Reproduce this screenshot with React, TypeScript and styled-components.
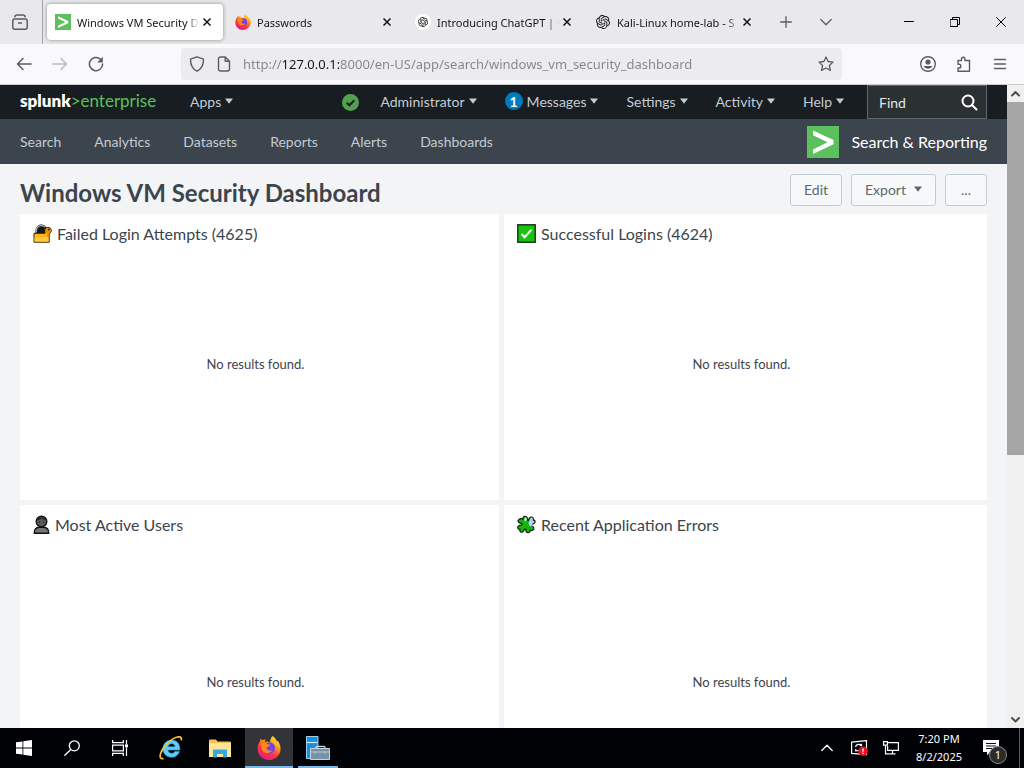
import React from "react";
import styled, { createGlobalStyle, css } from "styled-components";
import { SiOpenai } from "react-icons/si";

const uiFont = `"Noto Sans", "Open Sans", sans-serif`;
const appFont = `Lato, "Open Sans", sans-serif`;

const GlobalStyle = createGlobalStyle`
  *, *::before, *::after { box-sizing: border-box; }
  body { margin: 0; background: #f2f4f5; font-family: ${uiFont}; }
  button, input { font: inherit; margin: 0; }
  h1, h2, p { margin: 0; }
  svg { display: block; flex: none; }
`;

const Desktop = styled.div`
  display: flex;
  flex-direction: column;
  height: 100vh;
  overflow: hidden;
`;

const PlainButton = styled.button`
  display: flex;
  align-items: center;
  justify-content: center;
  padding: 0;
  border: 0;
  background: none;
  color: inherit;
`;

/* ---------- browser chrome ---------- */

const TabStrip = styled.header`
  display: flex;
  align-items: center;
  height: 44px;
  flex: none;
  background: #e9e9eb;
  color: #15141a;
`;

const FirefoxView = styled(PlainButton)`
  width: 43px;
  height: 44px;
  border-right: 1px solid #a5a5a8;
  padding-right: 3px;
  color: #5b5b66;
`;

const TabList = styled.div`
  display: flex;
  gap: 4px;
  padding: 0 3px 0 4px;
`;

const Tab = styled.div<{ $active?: boolean }>`
  display: flex;
  align-items: center;
  width: 176px;
  height: 36px;
  padding: 0 8px;
  border-radius: 4px;
  font-size: 11px;
  ${(p) =>
    p.$active &&
    css`
      background: #fff;
      box-shadow: 0 0 4px rgba(0, 0, 0, 0.4);
    `}
`;

const TabLabel = styled.span`
  flex: 1;
  min-width: 0;
  margin-left: 6px;
  white-space: nowrap;
  mask-image: linear-gradient(to left, transparent, #000 12px);
`;

const TabClose = styled(PlainButton)`
  width: 16px;
  height: 16px;
`;

const StripButton = styled(PlainButton)`
  width: 40px;
  height: 36px;
  color: #5b5b66;
`;

const WindowControls = styled.div`
  display: flex;
  margin-left: auto;
`;

const WindowButton = styled(PlainButton)`
  width: 46px;
  height: 44px;
  color: #000;
`;

const NavBar = styled.div`
  display: flex;
  align-items: center;
  height: 41px;
  flex: none;
  padding: 0 6px;
  background: #f9f9fb;
  border-bottom: 1px solid #cccccf;
  color: #5b5b66;
`;

const NavButton = styled(PlainButton)<{ $faded?: boolean }>`
  width: 36px;
  height: 32px;
  opacity: ${(p) => (p.$faded ? 0.4 : 1)};
`;

const AddressBar = styled.div`
  display: flex;
  align-items: center;
  flex: 1;
  height: 32px;
  margin: 0 68px 0 67px;
  padding: 0 8px;
  gap: 11px;
  border-radius: 4px;
  background: #ececee;
`;

const AddressInput = styled.input`
  flex: 1;
  min-width: 0;
  height: 24px;
  padding: 0;
  border: 0;
  outline: 0;
  font-size: 13px;
  background: linear-gradient(90deg, #85858a 39px, #15141a 39px, #15141a 96px, #85858a 96px);
  background-clip: text;
  -webkit-background-clip: text;
  -webkit-text-fill-color: transparent;
  color: #85858a;
`;

/* ---------- page ---------- */

const Viewport = styled.div`
  display: flex;
  flex: 1;
  min-height: 0;
`;

const Page = styled.div`
  flex: 1;
  min-width: 0;
  overflow: hidden;
  background: #f2f4f5;
  color: #3c444d;
  font-family: ${appFont};
  font-size: 14px;
`;

const GlobalBar = styled.div`
  display: flex;
  align-items: center;
  height: 34px;
  padding: 0 20px;
  background: #171d21;
  color: #c3cbd4;
`;

const Brand = styled.a`
  width: 136px;
  margin-right: 34px;
  color: #5cc05c;
  font-size: 17px;
  line-height: 32px;
  padding-bottom: 2px;
  text-decoration: none;
  white-space: nowrap;
`;

const BrandName = styled.span`
  color: #fff;
  font-weight: 800;
`;

const MenuButton = styled(PlainButton)`
  gap: 4px;
  height: 34px;
  padding-bottom: 2px;
  font-size: 14px;
  white-space: nowrap;
`;

const MenuGroup = styled.div`
  display: flex;
  align-items: center;
  gap: 28px;
  margin-left: auto;
`;

const Account = styled.div`
  display: flex;
  align-items: center;
  gap: 21px;
`;

const Badge = styled.span`
  display: flex;
  align-items: center;
  justify-content: center;
  width: 18px;
  height: 18px;
  border-radius: 50%;
  background: #007abd;
  color: #fff;
  font-size: 14px;
  font-weight: 700;
`;

const FindBox = styled.label`
  display: flex;
  align-items: center;
  width: 120px;
  height: 34px;
  margin-left: 23px;
  padding: 0 8px 0 11px;
  border: 1px solid #5c6773;
  background: #2b3033;
  color: #fff;
`;

const FindInput = styled.input`
  flex: 1;
  min-width: 0;
  padding: 0;
  border: 0;
  outline: 0;
  background: none;
  color: #e1e6eb;
  &::placeholder { color: #e1e6eb; opacity: 1; }
`;

const AppBar = styled.nav`
  display: flex;
  align-items: center;
  gap: 33px;
  height: 45px;
  padding: 0 20px;
  background: #3c444d;
`;

const AppLink = styled.a`
  color: #c3cbd4;
  text-decoration: none;
`;

const AppName = styled.a`
  display: flex;
  align-items: center;
  gap: 12px;
  margin-left: auto;
  color: #fff;
  font-size: 16px;
  text-decoration: none;
`;

const DashboardHeader = styled.div`
  display: flex;
  align-items: center;
  height: 50px;
  padding: 2px 20px 0;
`;

const Title = styled.h1`
  flex: 1;
  padding-top: 6px;
  font-size: 24px;
  line-height: 32px;
  font-weight: 700;
`;

const Actions = styled.div`
  display: flex;
  gap: 9px;
`;

const ActionButton = styled.button`
  display: flex;
  align-items: center;
  justify-content: center;
  gap: 8px;
  min-width: 42px;
  height: 32px;
  padding: 0 13px 2px;
  border: 1px solid #c3cbd4;
  border-radius: 3px;
  background: #f7f8fa;
  color: #5c6773;
  font-size: 14px;
`;

const PanelGrid = styled.main`
  display: grid;
  grid-template-columns: 479fr 483fr;
  grid-template-rows: 286px 340px;
  gap: 5px;
  padding: 0 20px 20px;
`;

const Panel = styled.section`
  display: flex;
  flex-direction: column;
  background: #fff;
`;

const PanelTitle = styled.h2`
  display: flex;
  align-items: center;
  gap: 5px;
  height: 38px;
  padding: 0 13px;
  font-size: 16px;
  font-weight: 400;
`;

const PanelBody = styled.div`
  display: flex;
  flex: 1;
  align-items: center;
  justify-content: center;
  padding: 0 8px 24px 0;
  font-size: 13px;
`;

const ScrollBar = styled.div`
  display: flex;
  flex-direction: column;
  width: 17px;
  background: #f0f0f0;
  color: #505050;
`;

const ScrollStep = styled(PlainButton)`
  width: 17px;
  height: 17px;
`;

const ScrollTrack = styled.div`
  flex: 1;
`;

const ScrollThumb = styled.div`
  height: 58%;
  background: #a6a6a6;
`;

/* ---------- taskbar ---------- */

const Taskbar = styled.footer`
  display: flex;
  height: 40px;
  flex: none;
  background: #010206;
  color: #fff;
`;

const TaskGroup = styled.div<{ $gap: number }>`
  display: flex;
  gap: ${(p) => p.$gap}px;
  margin-right: 3px;
`;

const TaskButton = styled(PlainButton)<{ $active?: boolean; $running?: boolean }>`
  position: relative;
  width: 48px;
  height: 40px;
  background: ${(p) => (p.$active ? "#333438" : "none")};
  ${(p) =>
    (p.$active || p.$running) &&
    css`
      &::after {
        content: "";
        position: absolute;
        right: ${p.$active ? 0 : 4}px;
        bottom: 0;
        left: ${p.$active ? 0 : 4}px;
        height: 2px;
        background: #76b9ed;
      }
    `}
`;

const Tray = styled.div`
  display: flex;
  align-items: center;
  margin-left: auto;
`;

const TrayButton = styled(PlainButton)`
  width: 32px;
  height: 40px;
`;

const Clock = styled.div`
  width: 64px;
  font-size: 11px;
  line-height: 18px;
  text-align: center;
`;

const NoticeButton = styled(PlainButton)`
  position: relative;
  width: 48px;
  height: 40px;
  padding-right: 8px;
`;

const NoticeCount = styled.span`
  position: absolute;
  top: 18px;
  right: 12px;
  width: 18px;
  height: 18px;
  border: 1px solid #8a8a8a;
  border-radius: 50%;
  background: #2b2b2b;
  font-size: 11px;
  line-height: 16px;
`;

const ShowDesktop = styled(PlainButton)`
  width: 5px;
  height: 40px;
  border-left: 1px solid #5a5a5e;
`;

/* ---------- drawings ---------- */

const SplunkMark = ({ size }: { size: number }) => (
  <svg width={size} height={size} viewBox="0 0 32 32" aria-hidden="true">
    <rect width="32" height="32" fill="#5cc05c" />
    <path d="M6 4.5 26.500 14v4.300L6 28v-4.600L20.500 16.200 6 9.200z" fill="#fff" />
  </svg>
);

const FirefoxLogo = ({ size }: { size: number }) => {
  const id = React.useId();
  return (
    <svg width={size} height={size} viewBox="0 0 24 24" aria-hidden="true">
      <defs>
        <linearGradient id={id} x1="0.8" y1="0" x2="0.25" y2="1">
          <stop offset="0" stopColor="#fff44f" />
          <stop offset="0.35" stopColor="#ff980e" />
          <stop offset="0.65" stopColor="#ff3647" />
          <stop offset="1" stopColor="#e31587" />
        </linearGradient>
      </defs>
      <path
        d="M15.500 0c2.500 1.700 3.800 3.700 4.500 5.600l.9-.9c2.200 3.500 3 6.300 2.600 9.200C22.700 19.700 17.900 24 12 24 5.500 24 .5 19 .5 12.800c0-3 1-5.800 2.700-7.800l.1-2.400 2 1.600C6.300 3.500 7.500 3.300 8.600 3.500L7.600 6c2-.9 4.400-.7 6 .5C13 4.200 13.800 1.700 15.500 0z"
        fill={`url(#${id})`}
      />
      <circle cx="12.500" cy="12" r="5.700" fill="#7542e5" />
      <path d="M4 8c2-1.300 4.700-1.200 6.500.2l3 .5c-.5 1.700-3.700 1.600-4 3.400 0 2.200 3.400 3.500 6 2-1.800 3.700-7.500 4-9.800.6C4.500 12.800 3.700 10.400 4 8z" fill="#ff8a16" />
      <path d="M13 5c3.500.5 6 3.500 5.700 7.300 1.200-3 .4-6-1.200-8L15.500 1z" fill="#ffbd2e" />
    </svg>
  );
};

const ChatLogo = ({ boxed }: { boxed?: boolean }) =>
  boxed ? (
    <svg width="16" height="16" viewBox="0 0 16 16" aria-hidden="true">
      <circle cx="8" cy="8" r="8" fill="#fff" />
      <SiOpenai x="3" y="3" size={10} />
    </svg>
  ) : (
    <svg width="16" height="16" viewBox="0 0 16 16" aria-hidden="true">
      <SiOpenai x="1" y="1" size={14} />
    </svg>
  );

const CloseGlyph = () => (
  <svg width="8" height="8" viewBox="0 0 8 8" stroke="currentColor" strokeWidth="1.500" aria-hidden="true">
    <path d="M.5.5l7 7M7.500.5l-7 7" />
  </svg>
);

const Caret = () => (
  <svg width="8" height="6" viewBox="0 0 8 6" aria-hidden="true">
    <path d="M0 .5h8L4 5.800z" fill="currentColor" />
  </svg>
);

const Line = ({ size = 16, width = 1.5, d }: { size?: number; width?: number; d: string }) => (
  <svg
    width={size}
    height={size}
    viewBox={`0 0 ${size} ${size}`}
    fill="none"
    stroke="currentColor"
    strokeWidth={width}
    strokeLinecap="round"
    strokeLinejoin="round"
    aria-hidden="true"
  >
    <path d={d} />
  </svg>
);

const AccountIcon = () => (
  <svg width="16" height="16" viewBox="0 0 16 16" aria-hidden="true">
    <circle cx="8" cy="8" r="7.300" fill="none" stroke="currentColor" strokeWidth="1.400" />
    <circle cx="8" cy="6" r="2.600" fill="currentColor" />
    <path d="M3.500 10h9a5 5 0 0 1-9 0z" fill="currentColor" />
  </svg>
);

const ReloadIcon = () => (
  <svg width="16" height="16" viewBox="0 0 16 16" aria-hidden="true">
    <path d="M12.500 3.200A6.600 6.600 0 1 0 14.600 8" fill="none" stroke="currentColor" strokeWidth="1.500" strokeLinecap="round" />
    <path d="M14.800.8v5.600H9.200z" fill="currentColor" />
  </svg>
);

const LockEmoji = () => (
  <svg width="19" height="19" viewBox="0 0 19 19" aria-hidden="true">
    <path d="M3.500 9V6.300A4.800 4.800 0 0 1 13 5.500V9z" fill="#14181b" stroke="#14181b" strokeWidth="2.200" />
    <path d="M3.300 8.500V6.400a5 5 0 0 1 8.500-3.300" fill="none" stroke="#b4bbc0" strokeWidth="1.300" />
    <path d="M1 9.300h11V6q.2-2.500 3-2.700Q18 3.500 18.400 6.400q0 2.300-2.200 3.200V18.200H1z" fill="#ffb514" stroke="#33270f" strokeWidth="1" />
    <path d="M1.600 13h14v4.600h-14z" fill="#ffc83d" />
    <path d="M12.300 6q.3-2.200 2.800-2.300 2.500.3 2.700 2.800-.2 1.900-2.300 2.600V14L14 12V9.200q-1.700-1-1.700-3.200z" fill="#f28a00" />
    <circle cx="15.800" cy="5.600" r="1" fill="#222" />
  </svg>
);

const CheckEmoji = () => (
  <svg width="19" height="19" viewBox="0 0 19 19" aria-hidden="true">
    <rect x=".8" y=".8" width="17.400" height="17.400" fill="#16c60c" stroke="#1b2b1b" strokeWidth="1.400" />
    <path d="M4.500 10l3.200 3.200 6.800-7.500" fill="none" stroke="#fff" strokeWidth="2" />
  </svg>
);

const UserEmoji = () => (
  <svg width="17" height="19" viewBox="0 0 17 19" aria-hidden="true">
    <path d="M1.300 18.200c-.2-4.500 2-5.800 5-6h4.400c3 .2 5.200 1.500 5 6z" fill="#767676" stroke="#111" strokeWidth="1.400" />
    <circle cx="8.500" cy="6.600" r="5.300" fill="#5c5c5c" stroke="#111" strokeWidth="1.400" />
    <path d="M3.800 5.500C4.300 1.500 12 1 13 5.500 10.500 5 10 4 9 3.500 7.500 4.500 6 5 3.800 5.500z" fill="#25282b" />
    <path d="M6 7h1.200M10 7h1.200" stroke="#111" strokeWidth="1.200" />
  </svg>
);

const PuzzleEmoji = () => (
  <svg width="19" height="19" viewBox="0 0 19 19" aria-hidden="true">
    <path
      d="M2 4.500C3.300 3.200 5 3.600 6.300 4.800 5.300 2.500 6.700 1 8.500 1.300c2 .5 2.200 2 2 3.700l1 .4c.3-2 1.300-3.600 3.200-3.400 1.800.5 1.800 1.800 1.300 2.900 1.500-.2 2.400 1 2 2.400-.7 1.700-2.300 1.900-4 1.900l-.8 1.400c2.200.3 4 1.400 3.600 3.300-.6 1.800-2.200 2-3.600 1.300.1 1.700-1 2.700-2.500 2.500-1.600-.4-2-1.900-2-3.400l-1.300-.1c-.5 2-1.600 3.300-3.400 2.900-1.200-.5-1.400-1.600-1-2.700-1.400.1-2.600-.8-2.300-2.300.5-1.500 2.200-1.900 3.800-2l.4-1.500C2.600 8.200 1 7.300 1 5.800z"
      fill="#16b50c"
      stroke="#10230f"
      strokeWidth="1.200"
    />
    <path d="M11.500 7.500l2.500-5 1.700.5.2 3 2 .8-2.500 1.900-1.200 3.300-2-1.500z" fill="#a9d7f2" />
    <path d="M7 4.500L8.500 2l1.300 1.500-.3 2.300-1.200.6z" fill="#c5e6f5" />
  </svg>
);

const WindowsLogo = () => (
  <svg width="16" height="16" viewBox="0 0 16 16" fill="#fff" aria-hidden="true">
    <path d="M0 2.300l6.500-.9v6.100H0zM7.300 1.300L16 0v7.500H7.300zM0 8.400h6.500v6.200L0 13.700zM7.300 8.400H16V16l-8.700-1.300z" />
  </svg>
);

const TaskViewIcon = () => (
  <svg width="17" height="16" viewBox="0 0 17 16" fill="none" stroke="#fff" strokeWidth="1.200" aria-hidden="true">
    <path d="M.6 0v2.600h10.800V0M.6 5.100h10.800v5.800H.6zM.6 16v-2.600h10.800V16M14.500 0v4M14.500 7.500V16" />
    <path d="M13 4.300h3v3h-3z" fill="#fff" stroke="none" />
  </svg>
);

const ExplorerLogo = () => (
  <svg width="24" height="24" viewBox="0 0 24 24" aria-hidden="true">
    <path
      d="M20.500 15.500c-1.300 3.600-4.200 5.800-8 5.800-5 0-8.600-3.600-8.600-8.500s3.700-8.800 8.700-8.800c5.200 0 8.500 3.700 8.300 10H9c.2 2 1.500 3.300 3.700 3.300 1.500 0 2.500-.6 3.100-1.800zM9.100 10.700h7c-.2-1.900-1.500-3-3.400-3-2 0-3.300 1.100-3.600 3z"
      fill="#5ccdf6"
      stroke="#2a9ad8"
      strokeWidth=".6"
    />
    <path d="M4.500 22.500C1.500 23.200.3 21 1.800 17 4.500 9.500 13 2.300 18.500 1c3-.7 4.500.6 3.700 3.500" fill="none" stroke="#f6c22d" strokeWidth="1.700" />
  </svg>
);

const FolderLogo = () => (
  <svg width="22" height="19" viewBox="0 0 22 19" aria-hidden="true">
    <path d="M0 1.500Q0 .5 1 .5h6l1.500 2H21q1 0 1 1V18H0z" fill="#f0c34e" />
    <path d="M0 4h22v14H0z" fill="#ffe599" />
    <path d="M4 18.500v-8h14v8h-4V15H8v3.500z" fill="#35a8e0" />
  </svg>
);

const ServerManagerLogo = () => (
  <svg width="24" height="24" viewBox="0 0 24 24" aria-hidden="true">
    <path d="M.5.500h11.500v22H.5z" fill="#1b8ddb" stroke="#9ad1f4" />
    <path d="M1 6.500h10.500" stroke="#d4edfc" strokeWidth="1.200" />
    <path d="M10 12.500v-1q0-1 1-1h7q1 0 1 1v1" fill="none" stroke="#c8d4dc" strokeWidth="1.400" />
    <path d="M4.500 12.500h19v11h-19z" fill="#7592a6" stroke="#c8d4dc" />
    <path d="M5 16h18M9 15v2.500M19 15v2.500" stroke="#b9c8d2" />
  </svg>
);

const UpdateTrayIcon = () => (
  <svg width="17" height="16" viewBox="0 0 17 16" fill="none" stroke="#fff" aria-hidden="true">
    <path d="M.6 2.200L15.500.6v14L.6 13.400z" strokeWidth="1.200" />
    <path d="M4.500 7a3.500 3.500 0 0 1 6-1.500V3.700M10.500 5.500H8.700M10 8.700A3.500 3.500 0 0 1 4.700 10v1.500" strokeWidth="1.200" />
    <circle cx="12" cy="11.200" r="4.800" fill="#e81123" stroke="none" />
    <path d="M12 8.500v3.300M12 12.700v1.300" strokeWidth="1.400" />
  </svg>
);

const NetworkIcon = () => (
  <svg width="16" height="14" viewBox="0 0 16 14" fill="none" stroke="#fff" strokeWidth="1.200" aria-hidden="true">
    <path d="M4 1.600h11.400v7.800H4.600V5M9.500 9.500v3M6.500 12.900h6" />
    <path d="M.6.600h3.800v3.600H.6zM2.500 4.200v8.700H6.500" />
  </svg>
);

/* ---------- content ---------- */

const tabs = [
  { label: "Windows VM Security D", icon: <SplunkMark size={16} />, active: true },
  { label: "Passwords", icon: <FirefoxLogo size={16} /> },
  { label: "Introducing ChatGPT | O", icon: <ChatLogo boxed /> },
  { label: "Kali-Linux home-lab - S", icon: <ChatLogo /> },
];

const appLinks = ["Search", "Analytics", "Datasets", "Reports", "Alerts", "Dashboards"];

const panels = [
  { title: "Failed Login Attempts (4625)", icon: <LockEmoji /> },
  { title: "Successful Logins (4624)", icon: <CheckEmoji /> },
  { title: "Most Active Users", icon: <UserEmoji /> },
  { title: "Recent Application Errors", icon: <PuzzleEmoji /> },
];

const Menu = ({ label, children }: { label: string; children?: React.ReactNode }) => (
  <MenuButton type="button">
    {children}
    {label}
    <Caret />
  </MenuButton>
);

export default function App() {
  return (
    <Desktop>
      <GlobalStyle />
      <TabStrip>
        <FirefoxView type="button" aria-label="Firefox View">
          <Line d="M2.800 2.800Q3 .9 5 .9h6q2 0 2.200 1.900M2.800 5h10.400q2 0 2 2v6.200q0 2-2 2H2.800q-2 0-2-2V7q0-2 2-2zM6.500 9h3" />
        </FirefoxView>
        <TabList>
          {tabs.map((tab) => (
            <Tab key={tab.label} $active={tab.active}>
              {tab.icon}
              <TabLabel>{tab.label}</TabLabel>
              <TabClose type="button" aria-label={`Close ${tab.label}`}>
                <CloseGlyph />
              </TabClose>
            </Tab>
          ))}
        </TabList>
        <StripButton type="button" aria-label="New tab">
          <Line size={12} width={1.3} d="M6 .7v10.600M.7 6h10.600" />
        </StripButton>
        <StripButton type="button" aria-label="List all tabs">
          <Line size={12} width={1.3} d="M.8 3.500L6 8.700l5.200-5.200" />
        </StripButton>
        <WindowControls>
          <WindowButton type="button" aria-label="Minimize">
            <Line size={10} width={1} d="M.5 4.500h9" />
          </WindowButton>
          <WindowButton type="button" aria-label="Restore">
            <Line size={10} width={1} d="M.5 2.500h7v7h-7zM2.500 2.500v-2h7v7h-2" />
          </WindowButton>
          <WindowButton type="button" aria-label="Close window">
            <Line size={10} width={1} d="M.5.5l9 9M9.500.5l-9 9" />
          </WindowButton>
        </WindowControls>
      </TabStrip>

      <NavBar>
        <NavButton type="button" aria-label="Back">
          <Line d="M15 8H1.500M7 2.500L1.500 8 7 13.500" />
        </NavButton>
        <NavButton type="button" aria-label="Forward" $faded>
          <Line d="M1 8h13.500M9 2.500L14.500 8 9 13.500" />
        </NavButton>
        <NavButton type="button" aria-label="Reload">
          <ReloadIcon />
        </NavButton>
        <AddressBar>
          <Line d="M8 .8l6.500 2.400C14.500 9 12.500 13 8 15.200 3.500 13 1.500 9 1.500 3.200z" width={1.4} />
          <Line d="M4.500 1h4.700l4.300 4.300V13q0 2-2 2h-7q-2 0-2-2V3q0-2 2-2zM9.200 1v4.300h4.300" width={1.4} />
          <AddressInput
            aria-label="Address"
            defaultValue="http://127.0.0.1:8000/en-US/app/search/windows_vm_security_dashboard"
          />
          <PlainButton type="button" aria-label="Bookmark this page">
            <Line d="M8 1l2.100 4.500 4.900.6-3.600 3.400 1 4.900L8 12l-4.400 2.400 1-4.900L1 6.100l4.900-.6z" width={1.3} />
          </PlainButton>
        </AddressBar>
        <NavButton type="button" aria-label="Account">
          <AccountIcon />
        </NavButton>
        <NavButton type="button" aria-label="Extensions">
          <Line d="M2 4.500h3.500V3a1.700 1.700 0 0 1 3.400 0v1.500H13.500v10.700H2V12h1a1.800 1.800 0 0 0 0-3.700H2z" width={1.4} />
        </NavButton>
        <NavButton type="button" aria-label="Menu">
          <Line size={14} width={1.3} d="M1.500 2.500h11M1.500 7h11M1.500 11.500h11" />
        </NavButton>
      </NavBar>

      <Viewport>
        <Page>
          <GlobalBar>
            <Brand href="#home">
              <BrandName>splunk</BrandName>&gt;enterprise
            </Brand>
            <Menu label="Apps" />
            <MenuGroup>
              <Account>
                <svg width="17" height="17" viewBox="0 0 17 17" role="img" aria-label="Healthy">
                  <circle cx="8.500" cy="8.500" r="8.500" fill="#53a051" />
                  <path d="M4.700 8.700l2.700 2.600 4.900-5" fill="none" stroke="#171d21" strokeWidth="2" />
                </svg>
                <Menu label="Administrator" />
              </Account>
              <Menu label="Messages">
                <Badge>1</Badge>
              </Menu>
              <Menu label="Settings" />
              <Menu label="Activity" />
              <Menu label="Help" />
            </MenuGroup>
            <FindBox>
              <FindInput placeholder="Find" aria-label="Find" />
              <Line size={17} width={2} d="M12.500 7a5.500 5.500 0 1 1-11 0 5.500 5.500 0 0 1 11 0zM11.500 11.500l4 4" />
            </FindBox>
          </GlobalBar>
          <AppBar>
            {appLinks.map((name) => (
              <AppLink key={name} href={`#${name.toLowerCase()}`}>
                {name}
              </AppLink>
            ))}
            <AppName href="#app">
              <SplunkMark size={32} />
              Search &amp; Reporting
            </AppName>
          </AppBar>
          <DashboardHeader>
            <Title>Windows VM Security Dashboard</Title>
            <Actions>
              <ActionButton type="button">Edit</ActionButton>
              <ActionButton type="button">
                Export
                <Caret />
              </ActionButton>
              <ActionButton type="button" aria-label="More actions">
                ...
              </ActionButton>
            </Actions>
          </DashboardHeader>
          <PanelGrid>
            {panels.map((panel) => (
              <Panel key={panel.title}>
                <PanelTitle>
                  {panel.icon}
                  {panel.title}
                </PanelTitle>
                <PanelBody>
                  <p>No results found.</p>
                </PanelBody>
              </Panel>
            ))}
          </PanelGrid>
        </Page>
        <ScrollBar>
          <ScrollStep type="button" aria-label="Scroll up">
            <Line size={9} width={2} d="M1 6.500L4.500 3 8 6.500" />
          </ScrollStep>
          <ScrollTrack>
            <ScrollThumb />
          </ScrollTrack>
          <ScrollStep type="button" aria-label="Scroll down">
            <Line size={9} width={2} d="M1 3l3.500 3.500L8 3" />
          </ScrollStep>
        </ScrollBar>
      </Viewport>

      <Taskbar>
        <TaskGroup $gap={0}>
          <TaskButton type="button" aria-label="Start">
            <WindowsLogo />
          </TaskButton>
          <TaskButton type="button" aria-label="Search">
            <Line size={16} width={1.3} d="M15.300 5.800a5 5 0 1 1-10 0 5 5 0 0 1 10 0zM6.800 9.500L.8 15.300" />
          </TaskButton>
          <TaskButton type="button" aria-label="Task view">
            <TaskViewIcon />
          </TaskButton>
        </TaskGroup>
        <TaskGroup $gap={1}>
          <TaskButton type="button" aria-label="Internet Explorer">
            <ExplorerLogo />
          </TaskButton>
          <TaskButton type="button" aria-label="File Explorer">
            <FolderLogo />
          </TaskButton>
          <TaskButton type="button" aria-label="Firefox" $active>
            <FirefoxLogo size={24} />
          </TaskButton>
          <TaskButton type="button" aria-label="Server Manager" $running>
            <ServerManagerLogo />
          </TaskButton>
        </TaskGroup>
        <Tray>
          <TrayButton type="button" aria-label="Show hidden icons">
            <Line size={12} width={1.3} d="M.8 8.500L6 3.300l5.200 5.200" />
          </TrayButton>
          <TrayButton type="button" aria-label="Update status">
            <UpdateTrayIcon />
          </TrayButton>
          <TrayButton type="button" aria-label="Network">
            <NetworkIcon />
          </TrayButton>
          <Clock>
            7:20 PM
            <br />
            8/2/2025
          </Clock>
          <NoticeButton type="button" aria-label="Notifications">
            <svg width="16" height="16" viewBox="0 0 16 16" aria-hidden="true">
              <path d="M0 0h16v12H7l-3 3.500V12H0z" fill="#fff" />
              <path d="M3 3.500h10M3 6h10M3 8.500h7" stroke="#111" />
            </svg>
            <NoticeCount>1</NoticeCount>
          </NoticeButton>
          <ShowDesktop type="button" aria-label="Show desktop" />
        </Tray>
      </Taskbar>
    </Desktop>
  );
}
